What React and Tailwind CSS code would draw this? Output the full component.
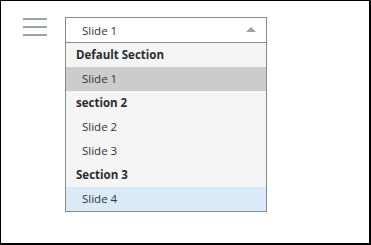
import React from "react";

const rows = [
  { label: "Default Section", type: "header" },
  { label: "Slide 1", type: "item", state: "selected" },
  { label: "section 2", type: "header" },
  { label: "Slide 2", type: "item" },
  { label: "Slide 3", type: "item" },
  { label: "Section 3", type: "header" },
  { label: "Slide 4", type: "item", state: "hover" },
];

export default function App() {
  return (
    <div
      className="w-[371px] h-[245px] bg-white border-l border-t border-r-2 border-b-2 border-black text-[11.5px] text-[#333]"
      style={{ fontFamily: '"Open Sans", "Noto Sans", sans-serif' }}
    >
      <div className="flex items-start pt-[16px] pl-[22px]">
        {/* Hamburger */}
        <div className="mt-[1px] flex flex-col gap-[6px] w-[24px]">
          <div className="h-[2px] bg-[#9ea2a3]" />
          <div className="h-[2px] bg-[#9ea2a3]" />
          <div className="h-[2px] bg-[#9ea2a3]" />
        </div>

        {/* Dropdown */}
        <div className="ml-[18px] w-[202px] border border-[#8a8a8a] bg-[#f5f5f5]">
          <div className="h-[25px] flex items-center justify-between bg-white border-b border-[#8a8a8a] pl-[16px] pr-[10px]">
            <span className="mt-[1px]">Slide 1</span>
            <span className="w-0 h-0 border-x-[5px] border-x-transparent border-b-[5px] border-b-[#a0a0a0] mt-[-1px]" />
          </div>
          {rows.map((r) => (
            <div
              key={r.label}
              className={
                "h-[24px] flex items-center " +
                (r.type === "header" ? "pl-[10px] font-bold text-[#2b2b2b] " : "pl-[16px] ") +
                (r.state === "selected"
                  ? "bg-[#cccccc]"
                  : r.state === "hover"
                  ? "bg-[#d9ebf9]"
                  : "")
              }
            >
              {r.label}
            </div>
          ))}
        </div>
      </div>
    </div>
  );
}
